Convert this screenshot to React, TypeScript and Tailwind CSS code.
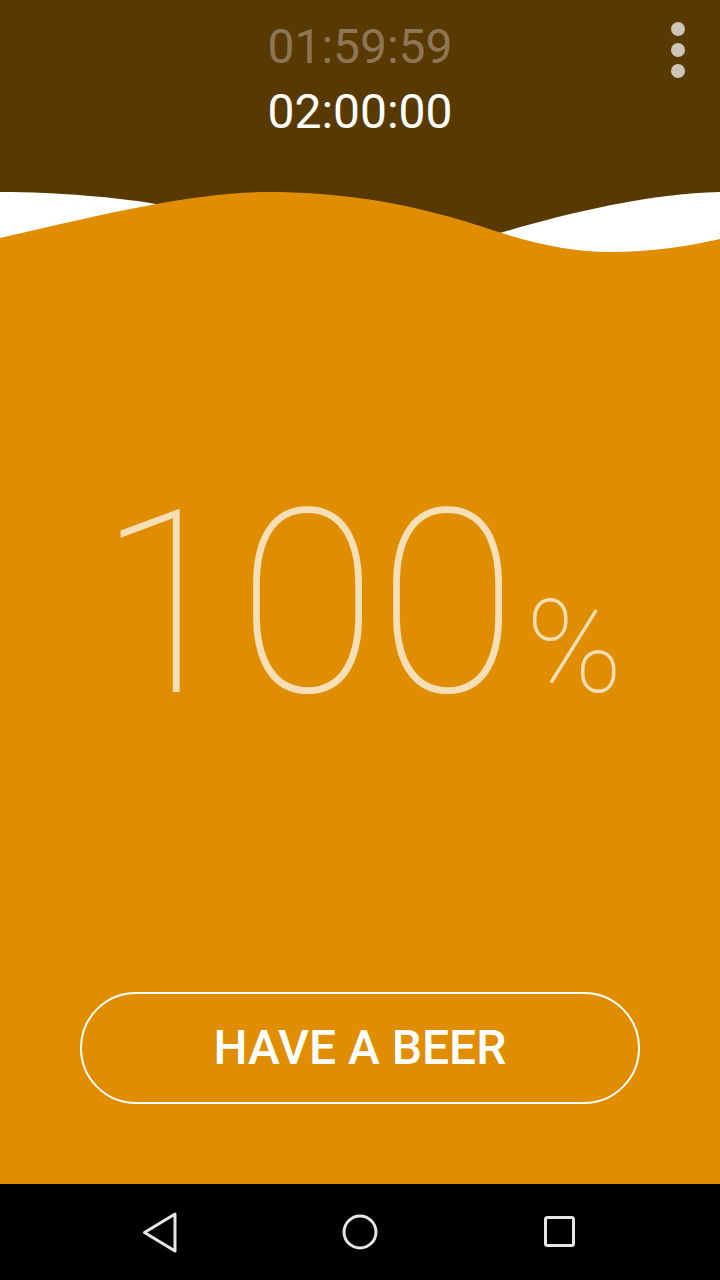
import React from "react"

const font = { fontFamily: "Roboto, 'Noto Sans', sans-serif" }

function Waves() {
  return (
    <svg className="block w-full h-[80px]" viewBox="0 180 720 80" preserveAspectRatio="none">
      <rect x="0" y="180" width="720" height="80" fill="#583900" />
      <path
        d="M0 192 C60 192 120 198 150 203 L350 240 L500 233 C560 215 650 193 720 192 L720 260 L0 260 Z"
        fill="#ffffff"
      />
      <path
        d="M0 238 C120 210 200 192 270 192 C330 192 400 200 480 226 C530 243 570 252 610 252 C650 252 690 246 720 239 L720 260 L0 260 Z"
        fill="#e08e00"
      />
    </svg>
  )
}

function NavBar() {
  return (
    <div className="h-[96px] bg-black">
      <div className="grid grid-cols-3 w-[600px] mx-auto h-full items-center">
        <div className="flex justify-center">
          <svg width="40" height="44" viewBox="140 1209 40 44">
            <path d="M175 1213 L144.5 1231.5 L175 1250 Z" fill="none" stroke="#e6e6e6" strokeWidth="3" strokeLinejoin="round" />
          </svg>
        </div>
        <div className="flex justify-center">
          <svg width="40" height="40" viewBox="0 0 40 40">
            <circle cx="20" cy="20" r="16" fill="none" stroke="#e6e6e6" strokeWidth="3" />
          </svg>
        </div>
        <div className="flex justify-center">
          <svg width="36" height="36" viewBox="0 0 36 36">
            <rect x="3.5" y="3.5" width="28" height="28" rx="2" fill="none" stroke="#e6e6e6" strokeWidth="3" />
          </svg>
        </div>
      </div>
    </div>
  )
}

export default function App() {
  return (
    <div className="w-[720px] h-[1280px] flex flex-col overflow-hidden" style={font}>
      {/* Timer header */}
      <div className="relative bg-[#583900] h-[180px] pt-[14px]">
        <div className="text-center text-[48px] leading-[65px] text-[#8d7656]">01:59:59</div>
        <div className="text-center text-[48px] leading-[65px] text-white">02:00:00</div>
        <button className="absolute top-[22px] right-[35px] flex flex-col gap-[7px]">
          <span className="w-[14px] h-[14px] rounded-full bg-[#cdc5b8]" />
          <span className="w-[14px] h-[14px] rounded-full bg-[#cdc5b8]" />
          <span className="w-[14px] h-[14px] rounded-full bg-[#cdc5b8]" />
        </button>
      </div>
      <Waves />

      {/* Beer level */}
      <div className="flex-1 bg-[#e08e00] flex flex-col items-center">
        <div className="pt-[217px] flex items-baseline">
          <span className="text-[256px] leading-none font-thin text-[#f6deb6]">100</span>
          <span className="text-[130px] leading-none font-thin text-[#f6deb6] ml-[8px]">%</span>
        </div>
        <button className="mt-auto mb-[80px] w-[560px] h-[112px] rounded-full border-2 border-white flex items-center justify-center text-white text-[48px] font-medium">
          HAVE A BEER
        </button>
      </div>

      <NavBar />
    </div>
  )
}
